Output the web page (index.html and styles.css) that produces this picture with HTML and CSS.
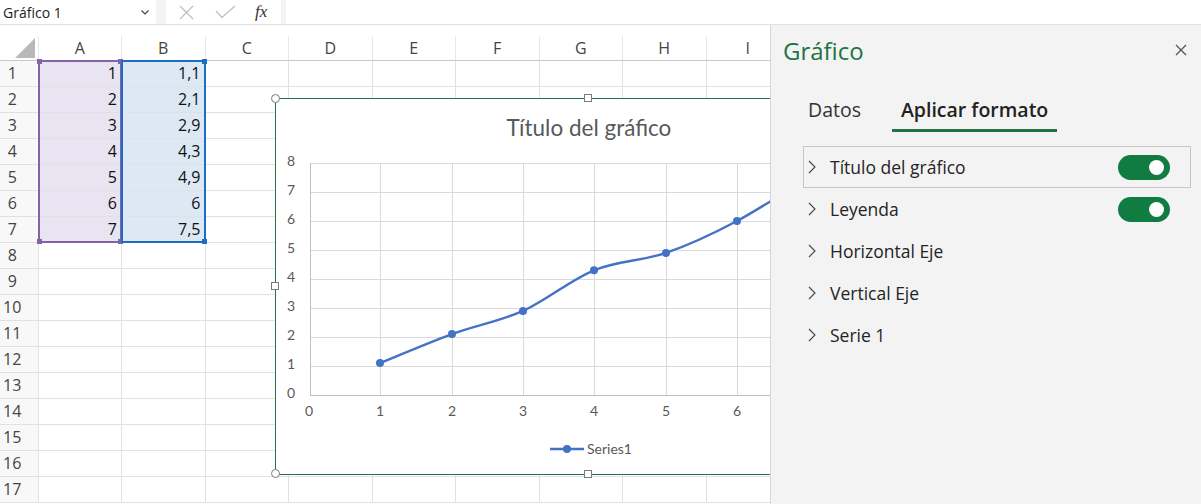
FILE: index.html
```html
<html lang="es">
<head>
<meta charset="UTF-8">
<title>Gráfico 1</title>
<link rel="stylesheet" href="styles.css">
</head>
<body>

<div class="topbar">
  <div class="namebox">
    <span>Gráfico 1</span>
    <svg width="8" height="5" viewBox="0 0 8 5"><polyline points="0.5,0.5 4,4 7.5,0.5" fill="none" stroke="#444" stroke-width="1.2"/></svg>
  </div>
  <div class="fx-tools">
    <svg width="15" height="15" viewBox="0 0 15 15"><path d="M1 1 L14 14 M14 1 L1 14" stroke="#bdbdbd" stroke-width="1.2"/></svg>
    <svg width="21" height="14" viewBox="0 0 21 14"><polyline points="1,6 7,12.5 20,1" fill="none" stroke="#bdbdbd" stroke-width="1.2"/></svg>
    <span class="fx">fx</span>
  </div>
  <div class="formula"></div>
</div>

<div class="main">
  <div class="sheet">
    <table class="grid">
      <colgroup>
        <col class="c-head"><col><col><col><col><col><col><col><col><col>
      </colgroup>
      <tr class="cols"><th class="corner"><span class="tri"></span></th><th>A</th><th>B</th><th>C</th><th>D</th><th>E</th><th>F</th><th>G</th><th>H</th><th>I</th></tr>
      <tr><th>1</th><td class="sa">1</td><td class="sb">1,1</td><td></td><td></td><td></td><td></td><td></td><td></td><td></td></tr>
      <tr><th>2</th><td class="sa">2</td><td class="sb">2,1</td><td></td><td></td><td></td><td></td><td></td><td></td><td></td></tr>
      <tr><th>3</th><td class="sa">3</td><td class="sb">2,9</td><td></td><td></td><td></td><td></td><td></td><td></td><td></td></tr>
      <tr><th>4</th><td class="sa">4</td><td class="sb">4,3</td><td></td><td></td><td></td><td></td><td></td><td></td><td></td></tr>
      <tr><th>5</th><td class="sa">5</td><td class="sb">4,9</td><td></td><td></td><td></td><td></td><td></td><td></td><td></td></tr>
      <tr><th>6</th><td class="sa">6</td><td class="sb">6</td><td></td><td></td><td></td><td></td><td></td><td></td><td></td></tr>
      <tr><th>7</th><td class="sa">7</td><td class="sb">7,5</td><td></td><td></td><td></td><td></td><td></td><td></td><td></td></tr>
      <tr><th>8</th><td></td><td></td><td></td><td></td><td></td><td></td><td></td><td></td><td></td></tr>
      <tr><th>9</th><td></td><td></td><td></td><td></td><td></td><td></td><td></td><td></td><td></td></tr>
      <tr><th>10</th><td></td><td></td><td></td><td></td><td></td><td></td><td></td><td></td><td></td></tr>
      <tr><th>11</th><td></td><td></td><td></td><td></td><td></td><td></td><td></td><td></td><td></td></tr>
      <tr><th>12</th><td></td><td></td><td></td><td></td><td></td><td></td><td></td><td></td><td></td></tr>
      <tr><th>13</th><td></td><td></td><td></td><td></td><td></td><td></td><td></td><td></td><td></td></tr>
      <tr><th>14</th><td></td><td></td><td></td><td></td><td></td><td></td><td></td><td></td><td></td></tr>
      <tr><th>15</th><td></td><td></td><td></td><td></td><td></td><td></td><td></td><td></td><td></td></tr>
      <tr><th>16</th><td></td><td></td><td></td><td></td><td></td><td></td><td></td><td></td><td></td></tr>
      <tr><th>17</th><td></td><td></td><td></td><td></td><td></td><td></td><td></td><td></td><td></td></tr>
    </table>

    <!-- data ranges highlighted by the selected chart -->
    <div class="range range-a">
      <span class="dot tl"></span><span class="dot tr"></span><span class="dot bl"></span><span class="dot br"></span>
    </div>
    <div class="range range-b">
      <span class="dot tr"></span><span class="dot br"></span>
    </div>

    <div class="chart">
      <svg class="plot" width="540" height="375" viewBox="1 1 540 375">
        <g stroke="#d9d9d9" stroke-width="1">
          <line x1="35" y1="65.5" x2="560" y2="65.5"/>
          <line x1="35" y1="94.5" x2="560" y2="94.5"/>
          <line x1="35" y1="123.5" x2="560" y2="123.5"/>
          <line x1="35" y1="152.5" x2="560" y2="152.5"/>
          <line x1="35" y1="181.5" x2="560" y2="181.5"/>
          <line x1="35" y1="210.5" x2="560" y2="210.5"/>
          <line x1="35" y1="239.5" x2="560" y2="239.5"/>
          <line x1="35" y1="268.5" x2="560" y2="268.5"/>
          <line x1="105.5" y1="65" x2="105.5" y2="297"/>
          <line x1="177.5" y1="65" x2="177.5" y2="297"/>
          <line x1="248.5" y1="65" x2="248.5" y2="297"/>
          <line x1="319.5" y1="65" x2="319.5" y2="297"/>
          <line x1="391.5" y1="65" x2="391.5" y2="297"/>
          <line x1="462.5" y1="65" x2="462.5" y2="297"/>
          <line x1="533.5" y1="65" x2="533.5" y2="297"/>
        </g>
        <g stroke="#bfbfbf" stroke-width="1">
          <line x1="35.5" y1="65" x2="35.5" y2="298"/>
          <line x1="35" y1="297.5" x2="560" y2="297.5"/>
        </g>
        <text class="title" x="314" y="37.5" text-anchor="middle">Título del gráfico</text>
        <g class="ticks" text-anchor="end">
          <text x="20" y="68">8</text>
          <text x="20" y="97">7</text>
          <text x="20" y="126">6</text>
          <text x="20" y="155">5</text>
          <text x="20" y="184">4</text>
          <text x="20" y="213">3</text>
          <text x="20" y="242">2</text>
          <text x="20" y="271">1</text>
          <text x="20" y="300">0</text>
        </g>
        <g class="ticks" text-anchor="middle">
          <text x="34" y="318">0</text>
          <text x="105" y="318">1</text>
          <text x="177" y="318">2</text>
          <text x="248" y="318">3</text>
          <text x="319" y="318">4</text>
          <text x="391" y="318">5</text>
          <text x="462" y="318">6</text>
        </g>
        <path d="M105 265.1 C117 260.3 153.2 244.8 177 236.1 C200.8 227.4 224.3 223.5 248 212.9 C271.7 202.3 295.2 182 319 172.3 C342.8 162.6 367.2 163.1 391 154.9 C414.8 146.7 438.3 135.6 462 123 C485.7 110.4 521.2 86.8 533 79.5" fill="none" stroke="#4472c4" stroke-width="2.4" stroke-linecap="round"/>
        <g fill="#4472c4">
          <circle cx="105" cy="265.1" r="4"/>
          <circle cx="177" cy="236.1" r="4"/>
          <circle cx="248" cy="212.9" r="4"/>
          <circle cx="319" cy="172.3" r="4"/>
          <circle cx="391" cy="154.9" r="4"/>
          <circle cx="462" cy="123" r="4"/>
          <circle cx="533" cy="79.5" r="4"/>
        </g>
        <line x1="275" y1="351" x2="309" y2="351" stroke="#4472c4" stroke-width="2.4"/>
        <circle cx="292" cy="351" r="4" fill="#4472c4"/>
        <text class="ticks" x="312" y="355.5">Series1</text>
      </svg>
      <span class="handle round h-tl"></span>
      <span class="handle h-tm"></span>
      <span class="handle h-ml"></span>
      <span class="handle round h-bl"></span>
      <span class="handle h-bm"></span>
    </div>
  </div>

  <aside class="pane">
    <div class="pane-head">
      <h1>Gráfico</h1>
      <svg class="close" width="12" height="12" viewBox="0 0 12 12"><path d="M1 1 L11 11 M11 1 L1 11" stroke="#555" stroke-width="1.3"/></svg>
    </div>
    <div class="tabs">
      <div class="tab">Datos</div>
      <div class="tab active">Aplicar formato</div>
    </div>
    <div class="options">
      <div class="option focused">
        <svg class="chev" width="8" height="14" viewBox="0 0 8 14"><polyline points="1,1 7,7 1,13" fill="none" stroke="#444" stroke-width="1.1"/></svg>
        <span>Título del gráfico</span>
        <span class="toggle"></span>
      </div>
      <div class="option">
        <svg class="chev" width="8" height="14" viewBox="0 0 8 14"><polyline points="1,1 7,7 1,13" fill="none" stroke="#444" stroke-width="1.1"/></svg>
        <span>Leyenda</span>
        <span class="toggle"></span>
      </div>
      <div class="option">
        <svg class="chev" width="8" height="14" viewBox="0 0 8 14"><polyline points="1,1 7,7 1,13" fill="none" stroke="#444" stroke-width="1.1"/></svg>
        <span>Horizontal Eje</span>
      </div>
      <div class="option">
        <svg class="chev" width="8" height="14" viewBox="0 0 8 14"><polyline points="1,1 7,7 1,13" fill="none" stroke="#444" stroke-width="1.1"/></svg>
        <span>Vertical Eje</span>
      </div>
      <div class="option">
        <svg class="chev" width="8" height="14" viewBox="0 0 8 14"><polyline points="1,1 7,7 1,13" fill="none" stroke="#444" stroke-width="1.1"/></svg>
        <span>Serie 1</span>
      </div>
    </div>
  </aside>
</div>

</body>
</html>
```

FILE: styles.css
```css
body {
  margin: 0;
  width: 1201px;
  height: 504px;
  overflow: hidden;
  font-family: 'Open Sans', 'Noto Sans', sans-serif;
  background-color: #fff;
  color: #222;
}

/* formula bar */
.topbar {
  display: flex;
  height: 24px;
  background-color: #f3f3f3;
  border-bottom: 1px solid #e1e1e1;
}
.namebox {
  width: 156px;
  display: flex;
  align-items: center;
  justify-content: space-between;
  padding: 0 7px 0 3px;
  box-sizing: border-box;
  background-color: #fff;
  font-size: 14px;
  color: #222;
}
.fx-tools {
  width: 115px;
  margin-left: 10px;
  display: flex;
  align-items: center;
  gap: 21px;
  padding-left: 13px;
  box-sizing: border-box;
  background-color: #fff;
}
.fx {
  font-family: 'Liberation Serif', serif;
  font-style: italic;
  font-size: 17px;
  color: #333;
  margin-left: -2px;
}
.formula {
  flex: 1;
  margin-left: 5px;
  background-color: #fff;
}

.main {
  display: flex;
  height: 479px;
}

/* sheet */
.sheet {
  position: relative;
  flex: none;
  width: 771px;
  padding-top: 11px;
  box-sizing: border-box;
  overflow: hidden;
  border-right: 1px solid #d6d6d6;
}
.grid {
  border-collapse: collapse;
  table-layout: fixed;
  width: 790px;
  font-size: 16px;
}
.grid col {
  width: 83.5px;
}
.grid col.c-head {
  width: 38px;
}
.grid tr {
  height: 26px;
}
.grid tr.cols {
  height: 24px;
}
.grid th,
.grid td {
  padding: 0;
  border-right: 1px solid #e1e1e1;
  border-bottom: 1px solid #e1e1e1;
  font-weight: normal;
  white-space: nowrap;
  overflow: hidden;
}
.grid th {
  color: #444;
  background-color: #f8f8f8;
  text-align: center;
  padding-right: 13px;
}
.grid .cols th {
  background-color: #fff;
  padding-right: 0;
  border-right-color: #e6e6e6;
  border-bottom-color: #c8c8c8;
}
.grid th.corner {
  text-align: right;
  vertical-align: bottom;
  padding: 0 3px 2px 0;
}
.tri {
  display: inline-block;
  width: 0;
  height: 0;
  border-left: 20px solid transparent;
  border-bottom: 20px solid #b9b9b9;
  vertical-align: bottom;
}
.grid td {
  text-align: right;
  padding-right: 4px;
  color: #111;
}
.grid td.sa {
  background-color: #e9e4f1;
}
.grid td.sb {
  background-color: #dce9f5;
}

.range {
  position: absolute;
  top: 35px;
  height: 183px;
  box-sizing: border-box;
}
.range-a {
  left: 38px;
  width: 84px;
  border: 2px solid #8461a8;
}
.range-b {
  left: 121px;
  width: 85px;
  border: 2px solid #1b6ec2;
}
.dot {
  position: absolute;
  width: 5px;
  height: 5px;
  background-color: #8461a8;
}
.range-b .dot {
  background-color: #1b6ec2;
}
.dot.tl { left: -3px; top: -3px; }
.dot.tr { right: -3px; top: -3px; }
.dot.bl { left: -3px; bottom: -3px; }
.dot.br { right: -3px; bottom: -3px; }

/* chart object */
.chart {
  position: absolute;
  left: 275px;
  top: 73px;
  width: 542px;
  height: 377px;
  box-sizing: border-box;
  border: 1px solid #217346;
  background-color: #fff;
}
.plot {
  display: block;
  font-family: 'Lato', 'Open Sans', sans-serif;
}
.plot .title {
  font-size: 22.5px;
  fill: #595959;
}
.plot .ticks {
  font-size: 14px;
  fill: #595959;
}
.handle {
  position: absolute;
  width: 8px;
  height: 8px;
  box-sizing: border-box;
  border: 1px solid #7b7b7b;
  background-color: #fff;
}
.handle.round {
  width: 9px;
  height: 9px;
  border-radius: 50%;
}
.h-tl { left: -5px; top: -5px; }
.h-bl { left: -5px; top: 370px; }
.h-tm { left: 308px; top: -5px; }
.h-bm { left: 308px; top: 371px; }
.h-ml { left: -5px; top: 183px; }

/* task pane */
.pane {
  flex: 1;
  min-width: 0;
  background-color: #f3f3f3;
  padding: 8px 14px 0 12px;
  box-sizing: border-box;
}
.pane-head {
  display: flex;
  align-items: center;
  justify-content: space-between;
  height: 36px;
}
.pane-head h1 {
  margin: 0;
  font-size: 24px;
  font-weight: normal;
  color: #217346;
  line-height: 36px;
}
.close {
  margin-top: -2px;
}
.tabs {
  display: flex;
  gap: 22px;
  margin: 29px 0 0 16px;
}
.tab {
  padding: 0 9px 7px;
  line-height: 24px;
  font-size: 19.5px;
  color: #333;
  border-bottom: 3px solid transparent;
}
.tab.active {
  font-weight: 600;
  color: #222;
  border-bottom-color: #217346;
}
.options {
  width: 388px;
  margin: 14px 0 0 20px;
}
.option {
  display: flex;
  align-items: center;
  height: 42px;
  box-sizing: border-box;
  border: 1px solid transparent;
  padding-left: 4px;
  font-size: 17.5px;
  color: #242424;
}
.option.focused {
  border-color: #c6c6c6;
}
.chev {
  margin-right: 14px;
}
.toggle {
  position: relative;
  margin-left: auto;
  margin-right: 20px;
  width: 52px;
  height: 25px;
  border-radius: 13px;
  background-color: #107c41;
}
.toggle::after {
  content: '';
  position: absolute;
  right: 6px;
  top: 5px;
  width: 15px;
  height: 15px;
  border-radius: 50%;
  background-color: #fff;
}
```
